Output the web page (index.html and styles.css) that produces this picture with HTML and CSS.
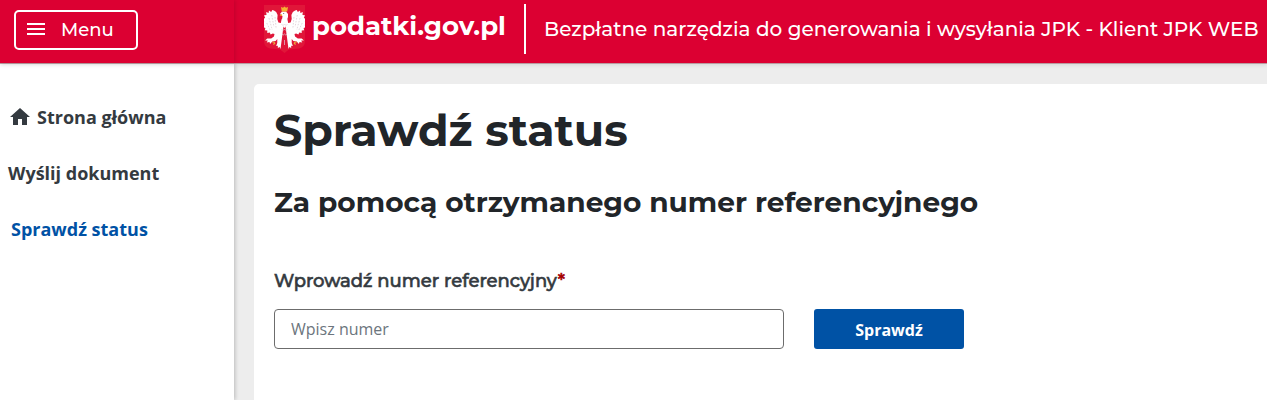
FILE: index.html
```html
<!DOCTYPE html>
<html lang="pl">
<head>
<meta charset="utf-8">
<title>Sprawdź status - podatki.gov.pl</title>
<link rel="stylesheet" href="styles.css">
</head>
<body>
<header class="topbar">
  <div class="topbar-menu">
    <button class="menu-button" type="button">
      <svg class="menu-icon" viewBox="0 0 18 12" width="18" height="12"><path d="M0 1h18M0 6h18M0 11h18" stroke="#fff" stroke-width="2"/></svg>
      <span class="menu-label">Menu</span>
    </button>
  </div>
  <div class="brand">
    <svg class="emblem" viewBox="0 0 41 48" width="41" height="48">
      <path d="M0 0h41v36q0 6-6 7.500L25 44.500l-4.500 3.500-4.500-3.500-10-1Q0 42 0 36z" fill="#e01639"/>
      <defs>
        <g id="wing">
          <path fill="#fff" d="M20.600 13L18 14l-.8 4-2.200-.5-1-3.500.3-4-1.300-3-2-1.500-1.500-.5-1 2-2-1.500-.3 2.500-2.200-1 .3 3-2.200.2 1 2.800-2.100 1.200 1.200 2.300-1.700 1.800 1.800 1.700-1.100 2 2.100 1-.5 2.200 2.200.3 0 2.500 2.200-.5.800 2 2-1 1.500.5-.5 2.500-2.500 2-3.500 0-2 2 2.500 0-1 2 2.500-.5.500 2 2-2.500 3-.5 1.500-2 0 4-1 3 1.500-.3 0 2.300 1.600-1 .8 2z"/>
          <path d="M9 10l2 12M6.500 13l3 12M12 12l1 12M4.500 18l3.500 8" fill="none" stroke="#d2c0c9" stroke-width=".6" stroke-dasharray="1.600 1.400"/>
          <path d="M9.500 37l2.500.5M10.500 39.500l1.500-1.500" fill="none" stroke="#e9a83a" stroke-width="1.100"/>
        </g>
      </defs>
      <use href="#wing" transform="translate(-2.260 0) scale(1.110 1)"/>
      <use href="#wing" transform="translate(43.260 0) scale(-1.110 1)"/>
      <path d="M16 9l2-2.500h4l2 2.500v3l-1 3 1 4-3.500 4-3.500-4 1-4 .5-4z" fill="#fff"/>
      <path d="M17.500 19l1.500 1.500 1.500-1.500 1.500 1.500 1.500-1.500M17.500 24l1.500 1.500 1.500-1.500 1.500 1.500 1.500-1.500M18 29l1.200 1 1.300-1 1.300 1 1.200-1M20.500 35v5" fill="none" stroke="#dccfd7" stroke-width=".7"/>
      <path d="M17 2l2 .8 1.500-1.300 1.500 1.300 2-.8-.8 4.500h-5.400z" fill="#f5b233"/>
      <path d="M15.500 10.500l2.500-1.500v2z" fill="#f2ad22"/>
      <path d="M19 8.500h1.200" stroke="#888" stroke-width="1"/>
    </svg>
    <span class="brand-name">podatki.gov.pl</span>
    <span class="brand-divider"></span>
    <span class="brand-title">Bezpłatne narzędzia do generowania i wysyłania JPK - Klient JPK WEB</span>
  </div>
</header>
<div class="layout">
  <nav class="sidebar">
    <a class="nav-item nav-home"><svg class="home-icon" viewBox="0 0 20 17" width="20" height="17"><path d="M10 0l10 9h-3v8h-5v-6H8v6H3V9H0z" fill="#343a40"/></svg><span>Strona główna</span></a>
    <a class="nav-item nav-send"><span>Wyślij dokument</span></a>
    <a class="nav-item nav-active"><span>Sprawdź status</span></a>
  </nav>
  <main class="content">
    <section class="card">
      <h1 class="page-title"><span>Sprawdź status</span></h1>
      <h2 class="page-subtitle"><span>Za pomocą otrzymanego numer referencyjnego</span></h2>
      <label class="field-label" for="ref"><span>Wprowadź numer referencyjny</span><span class="required">*</span></label>
      <div class="form-row">
        <input class="field" id="ref" type="text" placeholder="Wpisz numer">
        <button class="submit" type="button"><span>Sprawdź</span></button>
      </div>
    </section>
  </main>
</div>
</body>
</html>
```
FILE: styles.css
```css
* { box-sizing: border-box; }
html, body { height: 100%; }
body {
  margin: 0;
  overflow: hidden;
  display: flex;
  flex-direction: column;
  background: #ededed;
  font-family: "Open Sans", sans-serif;
  color: #212529;
}
.topbar {
  position: relative;
  z-index: 2;
  flex: none;
  display: flex;
  height: 64px;
  background: #dc0032;
  border-bottom: 1px solid #b99ca1;
  box-shadow: 0 1px 4px rgba(0, 0, 0, .1);
  color: #fff;
  font-family: Montserrat, Inter, sans-serif;
  white-space: nowrap;
}
.topbar-menu {
  flex: none;
  width: 234px;
  padding: 10px 14px;
  box-shadow: 1px 0 4px rgba(0, 0, 0, .13);
}
.menu-button {
  display: flex;
  align-items: center;
  width: 124px;
  height: 40px;
  padding: 0 0 0 11px;
  gap: 16px;
  border: 2px solid #fff;
  border-radius: 5px;
  background: transparent;
  color: #fff;
  font: 500 18px/24px Montserrat, Inter, sans-serif;
}
.menu-icon { margin-top: -2px; }
.brand {
  display: flex;
  align-items: flex-start;
  padding: 4px 0 0 30px;
}
.emblem { flex: none; margin-top: 1px; }
.brand-name {
  width: 194px;
  margin: 5px 18px 0 7px;
  font-size: 26px;
  line-height: 34px;
  font-weight: 700;
}
.brand-divider {
  flex: none;
  width: 2px;
  height: 50px;
  background: #fff;
}
.brand-title {
  margin: 11px 0 0 18px;
  font-size: 20px;
  line-height: 28px;
  font-weight: 500;
}
.layout { flex: 1; display: flex; min-height: 0; }
.sidebar {
  flex: none;
  width: 234px;
  padding: 25px 8px 0;
  background: #fff;
  box-shadow: 1px 0 4px rgba(0, 0, 0, .22);
}
.nav-item {
  display: flex;
  align-items: center;
  height: 56px;
  color: #343a40;
  font-size: 18px;
  font-weight: 700;
}
.nav-home { gap: 7px; padding-left: 2px; }
.home-icon { margin-top: -2px; }
.nav-active { padding-left: 3px; color: #0052a5; }
.content { flex: 1; padding: 20px 0 0 20px; }
.card {
  height: 100%;
  padding: 19px 20px;
  background: #fff;
  border-top-left-radius: 5px;
}
.page-title, .page-subtitle, .field-label {
  display: block;
  margin: 0;
  font-family: Montserrat, Inter, sans-serif;
  white-space: nowrap;
}
.page-title { font-size: 44.3px; line-height: 54px; font-weight: 700; }
.page-subtitle { margin-top: 27px; font-size: 28px; line-height: 36px; font-weight: 700; }
.field-label {
  margin-top: 49px;
  height: 24px;
  font-size: 18px;
  line-height: 24px;
  font-weight: 500;
  color: #343a40;
  -webkit-text-stroke: .6px currentColor;
}
.required { color: #a50000; }
.form-row { display: flex; gap: 30px; margin-top: 16px; }
.field {
  width: 510px;
  height: 40px;
  padding: 0 16px;
  border: 1px solid #6c6c6c;
  border-radius: 4px;
  background: #fff;
  font: 400 16px/24px "Open Sans", sans-serif;
}
.field::placeholder { color: #6c757d; opacity: 1; }
.submit {
  width: 150px;
  height: 40px;
  padding: 2px 0 0;
  border: 0;
  border-radius: 3px;
  background: #0052a5;
  color: #fff;
  font: 700 16px/24px "Open Sans", sans-serif;
}
```
